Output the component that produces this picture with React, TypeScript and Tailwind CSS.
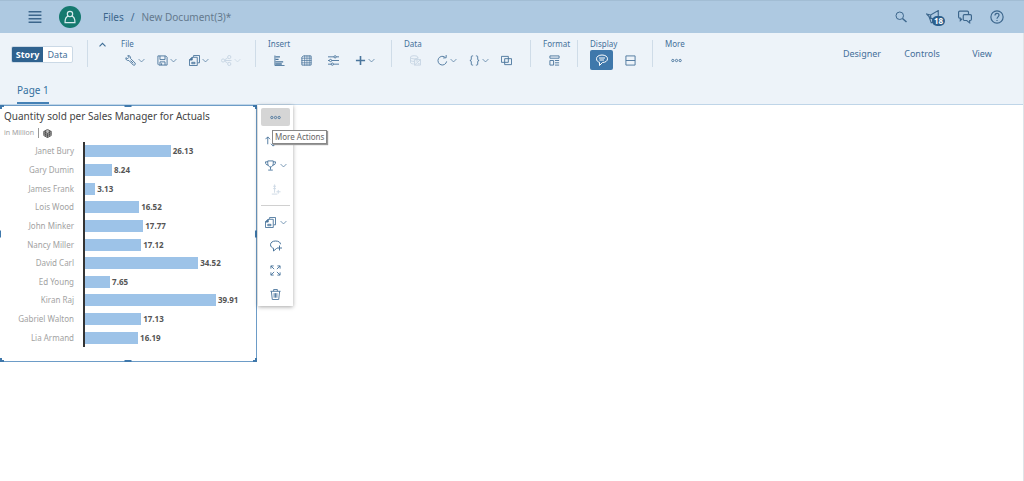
import type { ReactNode } from 'react';

interface IconProps {
  name: keyof typeof icons;
  className?: string;
}

// All icons are drawn on a 24x24 grid
const icons = {
  menu: (
    <path d="M1 3h22M1 9h22M1 15h22M1 21h22" strokeWidth="2.500" />
  ),
  user: (
    <>
      <circle cx="12" cy="7" r="4.6" />
      <path d="M8.500 10.500C4.500 12 3.500 16 3.500 21.500h17c0-5.500-1-9.500-5-11" />
    </>
  ),
  search: (
    <>
      <circle cx="9.500" cy="9.500" r="7.500" />
      <path d="M15 15l8 7" strokeWidth="3" />
    </>
  ),
  megaphone: (
    <path d="M1 7l7 1.500L21 1v17L8 14 1 7zM8 8.500V14M5 11l4 11 4-1.500-2-5.500" />
  ),
  chat: (
    <>
      <path d="M7 15l-3 3v-4H3a2 2 0 0 1-2-2V4a2 2 0 0 1 2-2h13a2 2 0 0 1 2 2v4" />
      <path d="M11 8h10a2 2 0 0 1 2 2v6a2 2 0 0 1-2 2h-1v4l-5-4h-4a2 2 0 0 1-2-2v-6a2 2 0 0 1 2-2z" />
    </>
  ),
  help: (
    <>
      <circle cx="12" cy="12" r="10.500" />
      <path d="M8.500 9.500c0-5 7-5 7-.8 0 3-3.500 3-3.500 6.300M12 17v2" />
    </>
  ),
  wrench: (
    <>
      <path d="M2 6l4 2 2.500-2.500L6 1.500c4-1 7 2 6 6l10 10c2 2.500-1.500 6.500-4 4.500L8.500 12C4.500 13 1 10 2 6z" />
      <path d="M12 12l6 6" />
    </>
  ),
  save: (
    <>
      <path d="M2 2h17l3 3v17H4l-2-2V2z" />
      <path d="M6.500 2v8h11V2M6.500 22v-7h11v7M10 18v4" />
    </>
  ),
  copy: (
    <>
      <path d="M10 4V1h13v16h-4" />
      <path d="M7 5h11v18H1V11z" />
      <path d="M1 11h6V5z" fill="currentColor" />
      <path d="M6 16h7v3H6z" />
    </>
  ),
  share: (
    <>
      <circle cx="4.500" cy="12" r="3.500" />
      <circle cx="18" cy="4.500" r="3.500" />
      <circle cx="18" cy="19.500" r="3.500" />
      <path d="M8 10.500l6.500-4M8 13.500l6.500 4M8 12h15" />
    </>
  ),
  bars: (
    <>
      <path d="M2 1v22h21" strokeWidth="2" />
      <path d="M3 4h10M3 9.500h7M3 15h17M3 19.500h14" strokeWidth="3" />
    </>
  ),
  grid: (
    <>
      <path d="M5 2h17v20H2V5z" />
      <path d="M8 1v22M13 1v22M18 1v22M1 7h22M1 12h22M1 17h22" strokeWidth="1.500" />
    </>
  ),
  sliders: (
    <>
      <path d="M0 4h13M18 4h6M0 12h3M8 12h16M0 20h7M12 20h12" />
      <circle cx="15.500" cy="4" r="2.500" />
      <circle cx="5.500" cy="12" r="2.500" />
      <circle cx="9.500" cy="20" r="2.500" />
    </>
  ),
  plus: <path d="M12 2v20M2 12h20" strokeWidth="3.500" />,
  database: (
    <>
      <ellipse cx="9" cy="5" rx="8" ry="3.500" />
      <path d="M1 5v11c0 2 3 3.500 7 3.500M17 5v4M1 11c0 2 3 3 8 3" />
      <path d="M10 10h13v12H10zM10 22l13-12M13 13h4M17 19h4" />
    </>
  ),
  refresh: <path d="M21 14a9.500 9.500 0 1 1-4-9.500M13.500 6.500L20 6V0" />,
  braces: (
    <path d="M9 2H7Q5 2 5 4v5q0 3-3 3 3 0 3 3v5q0 2 2 2h2M15 2h2q2 0 2 2v5q0 3 3 3-3 0-3 3v5q0 2-2 2h-2" />
  ),
  linked: (
    <>
      <path d="M1 3h15v13H1z" />
      <path d="M8 8h15v13H8z" />
    </>
  ),
  layout: (
    <path d="M2 2h20v5H2zM2 12h8v10H2zM13 12h9M13 17h9M13 22h9" />
  ),
  comment: (
    <>
      <path d="M12 2C5.500 2 1 5.200 1 9.500s3 6.500 6 7V23l6-6c6 0 10-3.200 10-7.500S18.500 2 12 2z" />
      <path d="M6 8h12M7 12h9" />
    </>
  ),
  rows: <path d="M2 2h20v20H2zM2 12h20" />,
  dots: (
    <>
      <circle cx="4" cy="12" r="2.500" />
      <circle cx="12" cy="12" r="2.500" />
      <circle cx="20" cy="12" r="2.500" />
    </>
  ),
  up: <path d="M4 17l8-8 8 8" strokeWidth="3" />,
  down: <path d="M2 7l10 10L22 7" strokeWidth="2.500" />,
  sort: <path d="M6 18V2M1 7l5-5 5 5M18 6v16M13 17l5 5 5-5" />,
  trophy: (
    <path d="M6 2h12v6c0 4-2.500 7-6 7s-6-3-6-7V2zM6 4H1c0 5 2 7 6 7M18 4h5c0 5-2 7-6 7M12 15v6M7 22h10" />
  ),
  variance: <path d="M10 1v18M7 5h6M7 10h6M4 22h12M18 13v8M14 17h9" />,
  commentAdd: (
    <path d="M14 17h-1l-6 5v-5.500C4 16 1 13 1 9.500 1 5 5 2 11 2s10 2.500 10 6.500M19 11v10M14 16h10" />
  ),
  expand: (
    <path d="M2 8V2h6M2 2l7 7M16 2h6v6M22 2l-7 7M2 16v6h6M2 22l7-7M16 22h6v-6M22 22l-7-7" />
  ),
  trash: (
    <path d="M1 5h22M8 5V1h8v4M3 5l2 18h14l2-18M9 9v10M12 9v10M15 9v10" />
  ),
  cube: (
    <>
      <path d="M12 1l10 5.500v11L12 23 2 17.500v-11z" fill="#bbbbbb" />
      <path d="M2 6.500L12 12l10-5.500M12 12v11M7 4v16M17 4v16M2 12l10 5.500L22 12" />
    </>
  ),
};

const Icon = ({ name, className = 'size-[11px]' }: IconProps) => (
  <svg
    viewBox="0 0 24 24"
    fill="none"
    stroke="currentColor"
    strokeWidth="2"
    className={`shrink-0 ${className}`}
    aria-hidden="true"
  >
    {icons[name]}
  </svg>
);

interface ToolProps {
  icon: keyof typeof icons;
  label: string;
  menu?: boolean;
  disabled?: boolean;
}

const Tool = ({ icon, label, menu, disabled }: ToolProps) => (
  <button
    aria-label={label}
    disabled={disabled}
    className="flex h-5 items-center gap-0.5 text-[#4a759c] disabled:text-[#c6d4e2]"
  >
    <Icon name={icon} />
    {menu && <Icon name="down" className="size-[7px]" />}
  </button>
);

interface GroupProps {
  title: string;
  className: string;
  tools: string;
  children: ReactNode;
}

const Group = ({ title, className, tools, children }: GroupProps) => (
  <section className={`h-[27px] shrink-0 border-l border-[#cfdce8] pl-3 ${className}`}>
    <h2 className="text-[8px] leading-2">{title}</h2>
    <div className={`mt-0.5 flex items-center ${tools}`}>{children}</div>
  </section>
);

const managers = [
  { name: 'Janet Bury', value: 26.13 },
  { name: 'Gary Dumin', value: 8.24 },
  { name: 'James Frank', value: 3.13 },
  { name: 'Lois Wood', value: 16.52 },
  { name: 'John Minker', value: 17.77 },
  { name: 'Nancy Miller', value: 17.12 },
  { name: 'David Carl', value: 34.52 },
  { name: 'Ed Young', value: 7.65 },
  { name: 'Kiran Raj', value: 39.91 },
  { name: 'Gabriel Walton', value: 17.13 },
  { name: 'Lia Armand', value: 16.19 },
];

const AXIS_MAX = 50;

const Header = () => (
  <header className="flex h-[33px] items-center border-t border-[#a2bdd4] bg-[#aec9e1] pr-5 pl-7 text-[#3c668c]">
    <button aria-label="Menu">
      <Icon name="menu" className="size-3.5" />
    </button>
    <span className="ml-[17px] flex size-[22px] items-center justify-center rounded-full bg-[#15796f] text-[#d8ebee]">
      <Icon name="user" className="size-3.5" />
    </span>
    <nav className="ml-[22px] flex gap-[7px] text-[10px]">
      <a href="#files">Files</a>
      <span>/</span>
      <span className="text-[#64798d]">New Document(3)*</span>
    </nav>
    <div className="ml-auto flex items-center gap-[18px]">
      <button aria-label="Search">
        <Icon name="search" className="size-3.5 p-px" />
      </button>
      <button aria-label="Notifications" className="relative">
        <Icon name="megaphone" className="size-3.5" />
        <span className="absolute top-1.5 left-1.5 rounded-full bg-[#2c5f8c] px-[2px] text-[8px] leading-[10px] font-bold text-white">
          18
        </span>
      </button>
      <button aria-label="Discussions">
        <Icon name="chat" className="size-3.5" />
      </button>
      <button aria-label="Help">
        <Icon name="help" className="size-3.5" />
      </button>
    </div>
  </header>
);

const Toolbar = () => (
  <div className="border-b border-[#bfd5e8] bg-[#edf3f9] text-[#45709a]">
    <div className="flex h-[47px] items-start pt-[7px]">
      <div className="mt-1.5 ml-[11px] flex h-[17px] w-[62px] shrink-0 overflow-hidden rounded-xs border border-[#cbd9e6] bg-white text-[9px] leading-[15px]">
        <button className="w-[31px] bg-[#2f628f] font-bold text-white">Story</button>
        <button className="flex-1">Data</button>
      </div>
      <div className="ml-3.5 h-[27px] w-[22px] shrink-0 border-l border-[#cfdce8] pl-2.5">
        <button aria-label="Collapse" className="block text-[#3f6d96]">
          <Icon name="up" className="size-[9px]" />
        </button>
      </div>
      <section className="w-[146px] shrink-0 pl-3">
        <h2 className="text-[8px] leading-2">File</h2>
        <div className="mt-0.5 flex gap-3 pl-1">
          <Tool icon="wrench" label="Settings" menu />
          <Tool icon="save" label="Save" menu />
          <Tool icon="copy" label="Copy" menu />
          <Tool icon="share" label="Share" menu disabled />
        </div>
      </section>
      <Group title="Insert" className="w-[136px]" tools="gap-4 pl-1.5">
        <Tool icon="bars" label="Chart" />
        <Tool icon="grid" label="Table" />
        <Tool icon="sliders" label="Input control" />
        <Tool icon="plus" label="Add" menu />
      </Group>
      <Group title="Data" className="w-[139px]" tools="gap-3 pl-1.5">
        <span className="mr-1 flex">
          <Tool icon="database" label="Edit data" disabled />
        </span>
        <Tool icon="refresh" label="Refresh" menu />
        <Tool icon="braces" label="Variables" menu />
        <Tool icon="linked" label="Linked analysis" />
      </Group>
      <Group title="Format" className="w-[47px]" tools="pl-1.5">
        <Tool icon="layout" label="Layout" />
      </Group>
      <Group title="Display" className="w-[75px]" tools="gap-3">
        <button
          aria-label="Comment mode"
          className="flex h-5 w-[23px] items-center justify-center rounded-xs bg-[#3f78ab] text-white"
        >
          <Icon name="comment" className="size-3" />
        </button>
        <Tool icon="rows" label="Split view" />
      </Group>
      <Group title="More" className="w-[50px]" tools="pl-1.5">
        <Tool icon="dots" label="More tools" />
      </Group>
      <nav className="mt-1.5 mr-[11px] ml-auto flex text-[9px] leading-4">
        <button className="w-15">Designer</button>
        <button className="w-15">Controls</button>
        <button className="w-15">View</button>
      </nav>
    </div>
    <div className="flex h-6 items-start pl-[17px]">
      <a href="#page1" className="h-6 border-b-2 border-[#4581b5] pt-0.5 text-[10px] leading-4 text-[#33709f]">
        Page 1
      </a>
    </div>
  </div>
);

const ChartCard = () => (
  <section className="relative h-[257px] w-[257px] shrink-0 border border-l-0 border-[#6d9cc7] bg-white">
    <h1 className="pt-[3px] pl-1 text-[10px] leading-3.5 whitespace-nowrap text-[#444444]">
      Quantity sold per Sales Manager for Actuals
    </h1>
    <div className="mt-1 flex h-3 items-center pl-1 text-[7px] text-[#a0a0a0]">
      <span>in Million</span>
      <span className="mx-1 h-2.5 border-l border-[#999999]" />
      <Icon name="cube" className="size-[9px] text-[#444444]" />
    </div>
    <ul className="mt-[3px] flex h-[205px] flex-col">
      {managers.map((m) => (
        <li key={m.name} className="flex flex-1 items-center">
          <span className="w-[74px] text-right text-[8px] leading-3 text-[#a2a2a2]">{m.name}</span>
          <div className="ml-[9px] flex w-[166px] items-center self-stretch border-l-2 border-[#333333]">
            <div
              className="h-3 shrink-0 bg-[#9dc3e8]"
              style={{ width: `${(m.value / AXIS_MAX) * 100}%` }}
            />
            <span className="ml-0.5 text-[8px] font-bold text-[#555555]">{m.value.toFixed(2)}</span>
          </div>
        </li>
      ))}
    </ul>

    {/* Resize handles */}
    <span className="absolute -top-px left-0 size-1 border-t-2 border-l-2 border-[#3f78ab]" />
    <span className="absolute -top-px -right-px size-1 border-t-2 border-r-2 border-[#3f78ab]" />
    <span className="absolute -bottom-px left-0 size-1 border-b-2 border-l-2 border-[#3f78ab]" />
    <span className="absolute -right-px -bottom-px size-1 border-r-2 border-b-2 border-[#3f78ab]" />
    <span className="absolute -top-px left-1/2 h-0.5 w-[7px] -translate-x-1/2 bg-[#3f78ab]" />
    <span className="absolute -bottom-px left-1/2 h-0.5 w-[7px] -translate-x-1/2 bg-[#3f78ab]" />
    <span className="absolute top-1/2 left-0 h-[7px] w-px -translate-y-1/2 bg-[#3f78ab]" />
    <span className="absolute top-1/2 -right-px h-[7px] w-0.5 -translate-y-1/2 bg-[#3f78ab]" />
  </section>
);

const ActionMenu = () => (
  <aside className="relative ml-px flex w-[35px] shrink-0 flex-col self-start bg-white px-[3px] pt-[3px] text-[#4a759c] shadow-[0_1px_4px_rgba(0,0,0,0.35)]">
    <button
      aria-label="More Actions"
      className="flex h-[18px] items-center justify-center rounded-xs bg-[#d5d5d5]"
    >
      <Icon name="dots" />
    </button>
    <button aria-label="Sort" className="mt-[3px] flex h-6 items-center gap-1 pl-1">
      <Icon name="sort" />
      <Icon name="down" className="size-[7px]" />
    </button>
    <button aria-label="Rank" className="flex h-6 items-center gap-1 pl-1">
      <Icon name="trophy" />
      <Icon name="down" className="size-[7px]" />
    </button>
    <button aria-label="Add variance" disabled className="flex h-6 items-center justify-center text-[#ccd8e4]">
      <Icon name="variance" />
    </button>
    <hr className="mt-1 mb-1 border-[#d0d0d0]" />
    <button aria-label="Copy" className="flex h-6 items-center gap-1 pl-1">
      <Icon name="copy" />
      <Icon name="down" className="size-[7px]" />
    </button>
    <button aria-label="Add comment" className="flex h-6 items-center justify-center">
      <Icon name="commentAdd" className="size-3" />
    </button>
    <button aria-label="Fullscreen" className="flex h-6 items-center justify-center">
      <Icon name="expand" />
    </button>
    <button aria-label="Remove" className="flex h-6 items-center justify-center">
      <Icon name="trash" />
    </button>
    <div
      role="tooltip"
      className="absolute top-[25px] left-3.5 border border-[#888888] bg-white px-[2px] text-[8px] leading-3 whitespace-nowrap text-[#666666] shadow-[1px_1px_1px_#999999]"
    >
      More Actions
    </div>
  </aside>
);

const App = () => (
  <div className="min-h-screen bg-white font-['Noto_Sans',sans-serif]">
    <Header />
    <div className="min-h-[calc(100vh-33px)] border-r border-[#dfe4e8]">
      <Toolbar />
      <main className="flex items-start">
        <ChartCard />
        <ActionMenu />
      </main>
    </div>
  </div>
);

export default App;
